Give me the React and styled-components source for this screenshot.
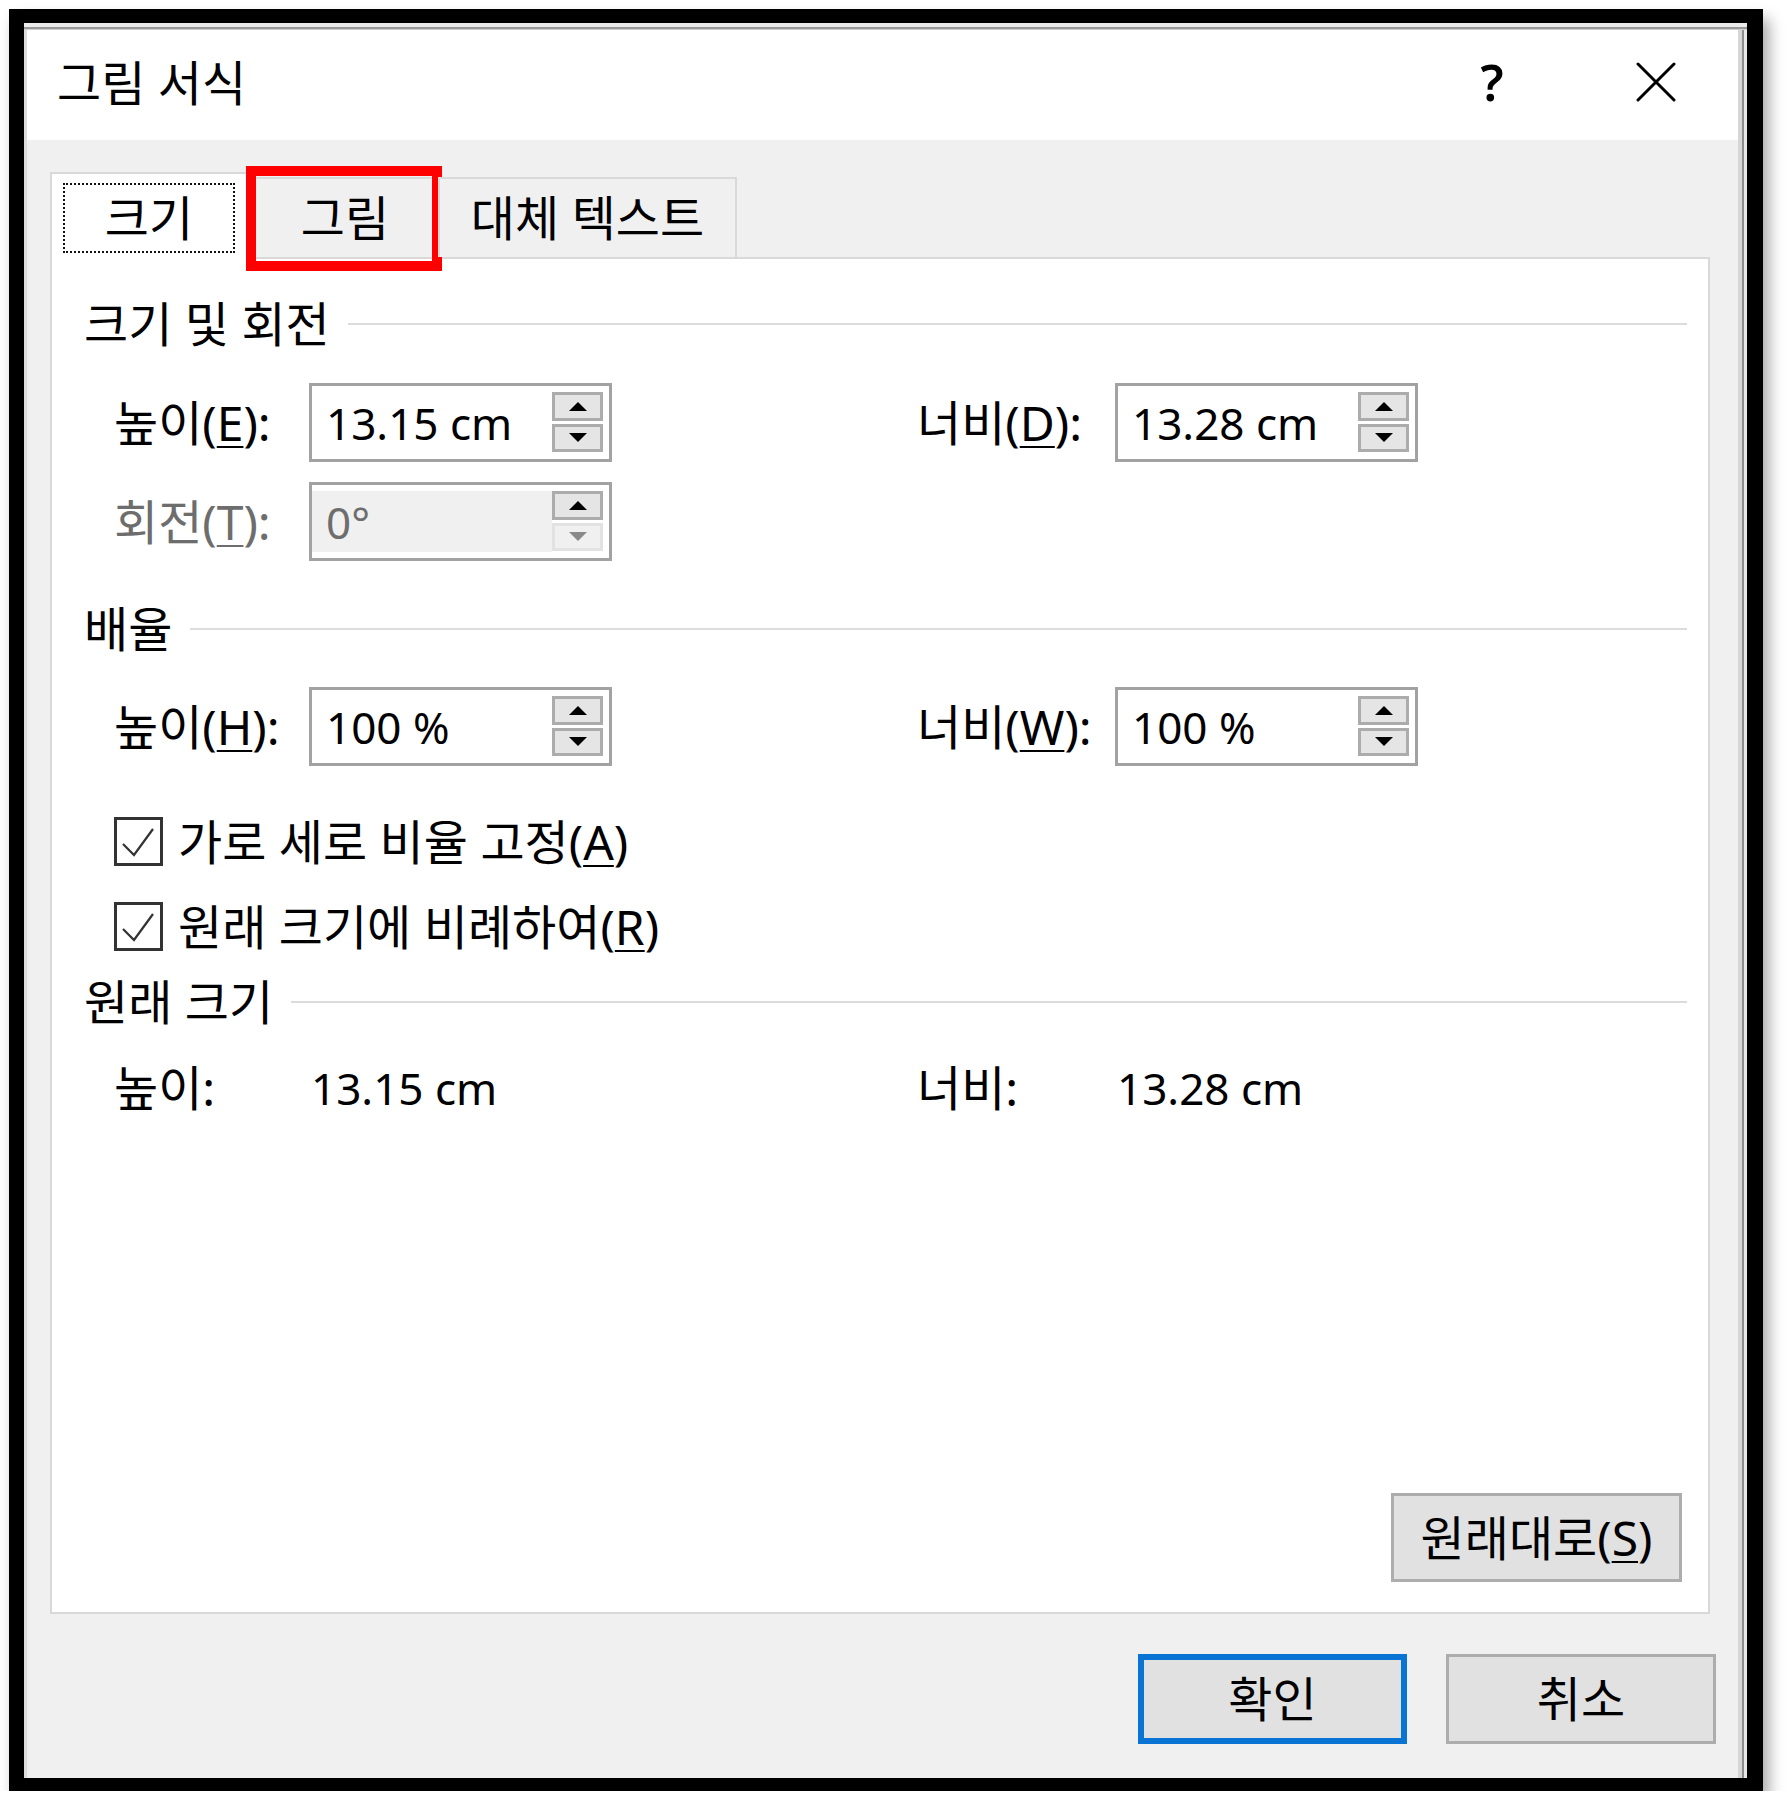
import React from 'react';
import styled, { createGlobalStyle } from 'styled-components';

const GlobalStyle = createGlobalStyle`
  html, body { margin: 0; padding: 0; background: #fff; }
  body { font-family: "Noto Sans", "Noto Sans CJK KR", sans-serif; color: #000; }
  * { box-sizing: border-box; }
`;

const KO = 48;
const NUM = 44;

const Frame = styled.div`
  margin: 9px 0 0 9px;
  width: 1754px;
  height: 1782px;
  border-style: solid;
  border-color: #000;
  border-width: 14px 16px 13px 15px;
  box-shadow: 6px 10px 14px rgba(0, 0, 0, 0.35);
  display: flex;
  flex-direction: column;
  background: #f0f0f0;
`;

const TopStrip = styled.div`
  flex: none;
  height: 7px;
  background: linear-gradient(to bottom, #ececec 0 4px, #9a9a9a 4px 6px, #d0d0d0 6px);
`;

const WindowRow = styled.div`
  flex: 1;
  display: flex;
  min-height: 0;
`;

const Main = styled.div`
  flex: 1;
  min-width: 0;
  display: flex;
  flex-direction: column;
  border-left: 3px solid #dcdcdc;
`;

const RightEdge = styled.div`
  flex: none;
  width: 9px;
  background: linear-gradient(to right, #d6d6d6 0 4px, #8c8c8c 4px 6px, #e8e8e8 6px);
`;

const TitleBar = styled.div`
  flex: none;
  height: 110px;
  background: #fff;
  display: flex;
  align-items: center;
  padding-left: 30px;
`;

const Title = styled.div`
  flex: 1;
  font-size: ${KO}px;
  line-height: 1;
  margin-top: -4px;
`;

const CaptionButton = styled.div`
  width: 164px;
  height: 110px;
  display: flex;
  align-items: center;
  justify-content: center;
  font-size: 50px;
  font-weight: 600;
  line-height: 1;
  padding-bottom: 6px;
`;

const Body = styled.div`
  flex: 1;
  display: flex;
  flex-direction: column;
  padding: 32px 22px 34px 23px;
  background: #f0f0f0;
`;

const TabStrip = styled.div`
  flex: none;
  height: 85px;
  display: flex;
  align-items: flex-end;
  position: relative;
  z-index: 1;
`;

const Tab = styled.div`
  position: relative;
  width: ${(p) => p.$width}px;
  height: ${(p) => (p.$active ? 87 : 80)}px;
  margin-bottom: ${(p) => (p.$active ? -2 : 0)}px;
  margin-left: ${(p) => (p.$overlap ? -2 : 0)}px;
  background: ${(p) => (p.$active ? '#fff' : '#f0f0f0')};
  border: 2px solid #d9d9d9;
  border-bottom: none;
  display: flex;
  align-items: center;
  justify-content: center;
  padding: ${(p) => (p.$active ? '9px 13px 6px 11px' : '0')};
  font-size: ${KO}px;
  line-height: 1;
  white-space: nowrap;
`;

const FocusBox = styled.div`
  width: 100%;
  height: 100%;
  border: 2px dotted #111;
  display: flex;
  align-items: center;
  justify-content: center;
`;

const Highlight = styled.div`
  position: absolute;
  top: -13px;
  left: -6px;
  right: -4px;
  bottom: -14px;
  border: 10px solid #ff0000;
  pointer-events: none;
`;

const Panel = styled.div`
  flex: 1;
  margin-right: 6px;
  background: #fff;
  border: 2px solid #d9d9d9;
  display: flex;
  flex-direction: column;
  padding: 0 21px 30px 32px;
`;

const Heading = styled.div`
  margin-top: ${(p) => p.$top}px;
  height: 44px;
  display: flex;
  align-items: center;
  gap: 18px;
  font-size: ${KO}px;
  line-height: 1;
  white-space: nowrap;
`;

const HeadingLine = styled.div`
  flex: 1;
  height: 2px;
  background: #dcdcdc;
`;

const FieldGrid = styled.div`
  margin-top: ${(p) => p.$top}px;
  margin-left: 30px;
  display: grid;
  grid-template-columns: 195px 303px 305px 198px 303px;
  grid-auto-rows: ${(p) => p.$rowHeight || 79}px;
  row-gap: 20px;
  align-items: center;
`;

const Label = styled.div`
  font-size: ${KO}px;
  line-height: 1;
  white-space: nowrap;
  color: ${(p) => (p.$disabled ? '#6d6d6d' : '#000')};
`;

const Value = styled.div`
  font-size: ${NUM}px;
  line-height: 1;
  white-space: nowrap;
  padding-left: 2px;
`;

const Mn = styled.u`
  text-decoration-thickness: 2px;
  text-underline-offset: 5px;
`;

const SpinBox = styled.div`
  width: 303px;
  height: 79px;
  border: 3px solid #a2a2a2;
  background: #fff;
  display: flex;
`;

const SpinValue = styled.div`
  flex: 1;
  margin: 6px 0;
  padding-left: 14px;
  display: flex;
  align-items: center;
  font-size: ${NUM}px;
  line-height: 1;
  white-space: nowrap;
  background: ${(p) => (p.$disabled ? '#f0f0f0' : '#fff')};
  color: ${(p) => (p.$disabled ? '#6d6d6d' : '#000')};
`;

const Spinner = styled.div`
  flex: none;
  width: 57px;
  padding: 6px 6px 7px 0;
  display: flex;
  flex-direction: column;
  gap: 3px;
`;

const SpinButton = styled.div`
  flex: 1;
  border: 3px solid ${(p) => (p.$disabled ? '#e2e2e2' : '#acacac')};
  background: ${(p) => (p.$disabled ? '#f0f0f0' : '#e5e5e5')};
  display: flex;
  align-items: center;
  justify-content: center;
`;

const Arrow = styled.div`
  width: 0;
  height: 0;
  border-left: 9px solid transparent;
  border-right: 9px solid transparent;
  ${(p) =>
    p.$dir === 'up'
      ? `border-bottom: 9px solid ${p.$disabled ? '#8a8a8a' : '#000'};`
      : `border-top: 9px solid ${p.$disabled ? '#8a8a8a' : '#000'};`}
`;

const CheckRow = styled.label`
  margin-top: ${(p) => p.$top}px;
  margin-left: 30px;
  height: 49px;
  display: flex;
  align-items: center;
  gap: 15px;
  font-size: ${KO}px;
  line-height: 1;
  white-space: nowrap;
`;

const CheckBox = styled.div`
  flex: none;
  width: 49px;
  height: 49px;
  border: 3px solid #333;
  background: #fff;
  display: flex;
`;

const Spacer = styled.div`
  flex: 1;
`;

const ButtonRow = styled.div`
  flex: none;
  margin-top: 40px;
  display: flex;
  justify-content: flex-end;
  gap: 39px;
`;

const Button = styled.div`
  width: ${(p) => p.$width}px;
  height: ${(p) => p.$height}px;
  background: #e1e1e1;
  border: ${(p) => (p.$primary ? '6px solid #0a74d5' : '3px solid #adadad')};
  display: flex;
  align-items: center;
  justify-content: center;
  font-size: ${KO}px;
  line-height: 1;
  white-space: nowrap;
`;

const ResetRow = styled.div`
  display: flex;
  justify-content: flex-end;
  padding-right: 5px;
`;

function Spin({ value, disabled }) {
  return (
    <SpinBox>
      <SpinValue $disabled={disabled}>{value}</SpinValue>
      <Spinner>
        <SpinButton>
          <Arrow $dir="up" />
        </SpinButton>
        <SpinButton $disabled={disabled}>
          <Arrow $dir="down" $disabled={disabled} />
        </SpinButton>
      </Spinner>
    </SpinBox>
  );
}

function Check({ top, children }) {
  return (
    <CheckRow $top={top}>
      <CheckBox>
        <svg width="43" height="43" viewBox="0 0 43 43">
          <polyline points="6,24 17,35 36,9" fill="none" stroke="#333" strokeWidth="2.2" />
        </svg>
      </CheckBox>
      <span>{children}</span>
    </CheckRow>
  );
}

export default function App() {
  return (
    <>
      <GlobalStyle />
      <Frame>
        <TopStrip />
        <WindowRow>
          <Main>
            <TitleBar>
              <Title>그림 서식</Title>
              <CaptionButton>?</CaptionButton>
              <CaptionButton>
                <svg width="40" height="40" viewBox="0 0 40 40">
                  <path d="M2 2 L38 38 M38 2 L2 38" stroke="#000" strokeWidth="3" strokeLinecap="round" />
                </svg>
              </CaptionButton>
            </TitleBar>
            <Body>
              <TabStrip>
                <Tab $active $width={200}>
                  <FocusBox>크기</FocusBox>
                </Tab>
                <Tab $width={190}>
                  그림
                  <Highlight />
                </Tab>
                <Tab $width={299} $overlap>
                  대체 텍스트
                </Tab>
              </TabStrip>
              <Panel>
                <Heading $top={43}>
                  크기 및 회전
                  <HeadingLine />
                </Heading>
                <FieldGrid $top={37}>
                  <Label>
                    높이(<Mn>E</Mn>):
                  </Label>
                  <Spin value="13.15 cm" />
                  <div />
                  <Label>
                    너비(<Mn>D</Mn>):
                  </Label>
                  <Spin value="13.28 cm" />
                  <Label $disabled>
                    회전(<Mn>T</Mn>):
                  </Label>
                  <Spin value="0°" disabled />
                </FieldGrid>
                <Heading $top={46}>
                  배율
                  <HeadingLine />
                </Heading>
                <FieldGrid $top={36}>
                  <Label>
                    높이(<Mn>H</Mn>):
                  </Label>
                  <Spin value="100 %" />
                  <div />
                  <Label>
                    너비(<Mn>W</Mn>):
                  </Label>
                  <Spin value="100 %" />
                </FieldGrid>
                <Check top={51}>
                  가로 세로 비율 고정(<Mn>A</Mn>)
                </Check>
                <Check top={36}>
                  원래 크기에 비례하여(<Mn>R</Mn>)
                </Check>
                <Heading $top={29}>
                  원래 크기
                  <HeadingLine />
                </Heading>
                <FieldGrid $top={42} $rowHeight={44}>
                  <Label>높이:</Label>
                  <Value>13.15 cm</Value>
                  <div />
                  <Label>너비:</Label>
                  <Value>13.28 cm</Value>
                </FieldGrid>
                <Spacer />
                <ResetRow>
                  <Button $width={291} $height={89}>
                    원래대로(<Mn>S</Mn>)
                  </Button>
                </ResetRow>
              </Panel>
              <ButtonRow>
                <Button $primary $width={269} $height={90}>
                  확인
                </Button>
                <Button $width={270} $height={90}>
                  취소
                </Button>
              </ButtonRow>
            </Body>
          </Main>
          <RightEdge />
        </WindowRow>
      </Frame>
    </>
  );
}
